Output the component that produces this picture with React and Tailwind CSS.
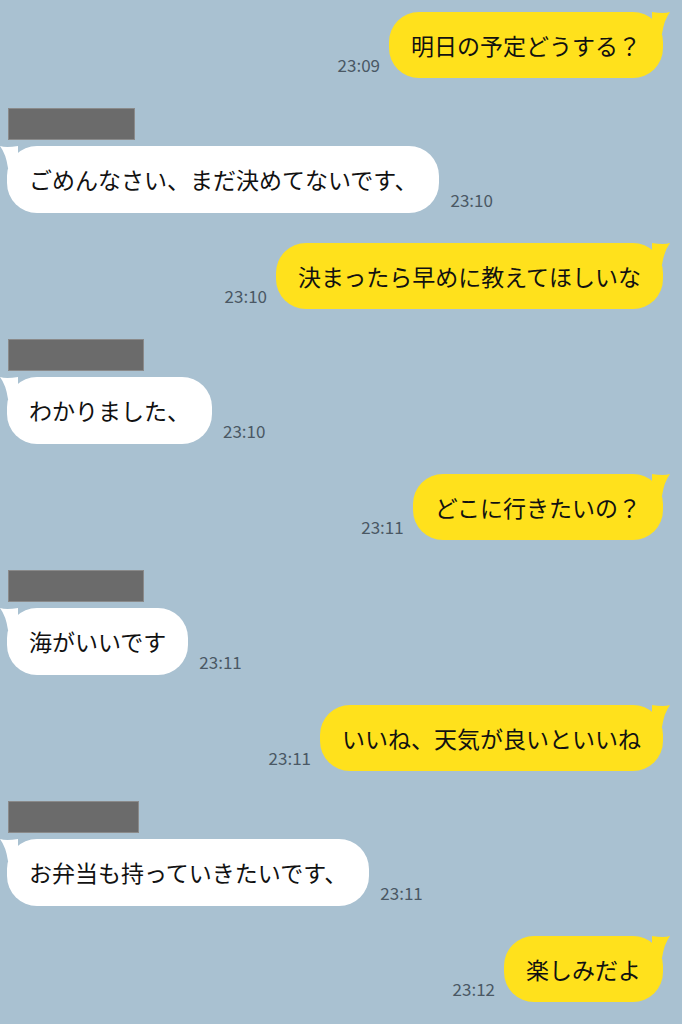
import React from 'react';

const font = { fontFamily: '"Noto Sans CJK JP", "Noto Sans", sans-serif' };

// Neutral placeholder messages in the reference's chat layout
const messages = [
    { side: 'right', text: '明日の予定どうする？', time: '23:09' },
    { side: 'left', text: 'ごめんなさい、まだ決めてないです、', time: '23:10', nameWidth: 'w-[127px]' },
    { side: 'right', text: '決まったら早めに教えてほしいな', time: '23:10' },
    { side: 'left', text: 'わかりました、', time: '23:10', nameWidth: 'w-[136px]' },
    { side: 'right', text: 'どこに行きたいの？', time: '23:11' },
    { side: 'left', text: '海がいいです', time: '23:11', nameWidth: 'w-[136px]' },
    { side: 'right', text: 'いいね、天気が良いといいね', time: '23:11' },
    { side: 'left', text: 'お弁当も持っていきたいです、', time: '23:11', nameWidth: 'w-[131px]' },
    { side: 'right', text: '楽しみだよ', time: '23:12' },
];

const Tail = ({ side, color }) => (
    <svg
        width="18"
        height="22"
        viewBox="0 0 18 22"
        className={side === 'right' ? 'absolute -right-[7px] top-0' : 'absolute -left-[7px] top-0 -scale-x-100'}
    >
        <path d="M0 0 Q12 2 18 0 Q12 8 10 22 L0 22 Z" fill={color} />
    </svg>
);

const RightMessage = ({ text, time }) => (
    <div className="flex justify-end items-end gap-[9px] pr-[19px]">
        <span className="text-[17px] text-[#4a5864] mb-[1px]">{time}</span>
        <div className="relative bg-[#ffe11c] rounded-[30px] h-[66px] flex items-center px-[22px]">
            <Tail side="right" color="#ffe11c" />
            <span className="text-[23px] text-[#111] relative">{text}</span>
        </div>
    </div>
);

const LeftMessage = ({ text, time, nameWidth }) => (
    <div className="flex flex-col pl-[7px]">
        <div className={`${nameWidth} h-[32px] bg-[#6b6b6b] border border-[#8a8a8a] ml-[1px] mb-[6px]`} />
        <div className="flex items-end gap-[11px]">
            <div className="relative bg-white rounded-[30px] h-[67px] flex items-center px-[22px]">
                <Tail side="left" color="#ffffff" />
                <span className="text-[23px] text-[#111] relative">{text}</span>
            </div>
            <span className="text-[17px] text-[#4a5864] mb-[1px]">{time}</span>
        </div>
    </div>
);

export default function App() {
    return (
        <div className="w-[682px] h-[1024px] bg-[#a9c1d1] overflow-hidden pt-[12px] flex flex-col gap-[30px]" style={font}>
            {messages.map((m, i) =>
                m.side === 'right'
                    ? <RightMessage key={i} text={m.text} time={m.time} />
                    : <LeftMessage key={i} text={m.text} time={m.time} nameWidth={m.nameWidth} />
            )}
        </div>
    );
}
